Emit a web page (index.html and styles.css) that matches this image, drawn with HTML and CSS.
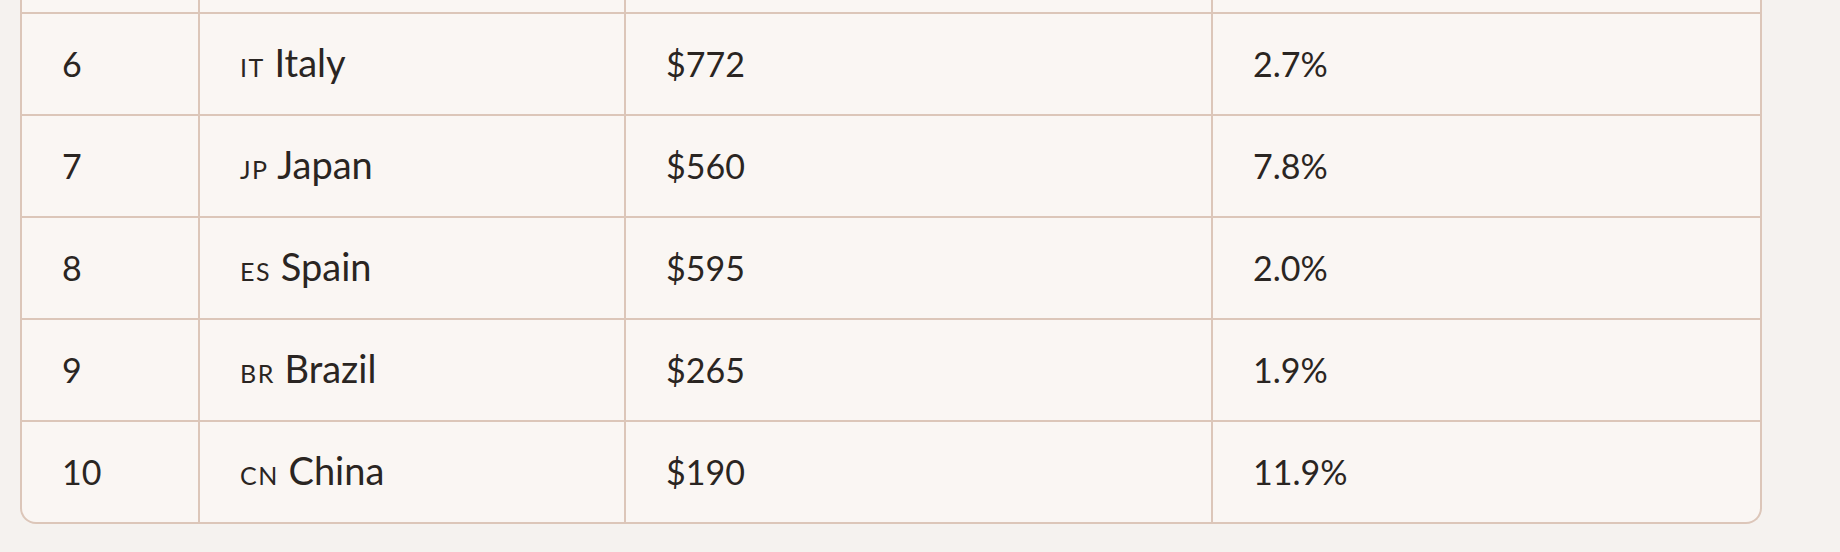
FILE: index.html
```html
<!DOCTYPE html>
<html lang="en">
<head>
<meta charset="utf-8">
<title>Top countries</title>
<link rel="stylesheet" href="styles.css">
</head>
<body>
<div class="table-wrap">
  <table class="rank-table">
    <tbody>
      <tr class="row-clipped"><td></td><td></td><td></td><td></td></tr>
      <tr><td>6</td><td class="country"><span class="code">IT</span> Italy</td><td>$772</td><td>2.7%</td></tr>
      <tr><td>7</td><td class="country"><span class="code">JP</span> Japan</td><td>$560</td><td>7.8%</td></tr>
      <tr><td>8</td><td class="country"><span class="code">ES</span> Spain</td><td>$595</td><td>2.0%</td></tr>
      <tr><td>9</td><td class="country"><span class="code">BR</span> Brazil</td><td>$265</td><td>1.9%</td></tr>
      <tr><td>10</td><td class="country"><span class="code">CN</span> China</td><td>$190</td><td>11.9%</td></tr>
    </tbody>
  </table>
</div>
</body>
</html>
```

FILE: styles.css
```css
html, body {
  margin: 0;
  padding: 0;
}
body {
  background: #f5f2ef;
  font-family: Lato, "Open Sans", sans-serif;
  color: #2a2522;
}
.table-wrap {
  margin-left: 20px;
  width: 1742px;
  box-sizing: border-box;
  border: 2px solid #dcc6b9;
  border-top: none;
  border-radius: 0 0 16px 16px;
  background: #faf6f3;
  overflow: hidden;
}
.rank-table {
  width: 100%;
  border-collapse: separate;
  border-spacing: 0;
  table-layout: fixed;
}
.rank-table td {
  height: 100px;
  padding: 0 0 0 40px;
  box-sizing: border-box;
  font-size: 34px;
  line-height: 40px;
  vertical-align: middle;
  border-top: 2px solid #dcc6b9;
  border-right: 2px solid #dcc6b9;
  white-space: nowrap;
}
.rank-table td:last-child {
  border-right: none;
}
.rank-table td:nth-child(1) { width: 178px; }
.rank-table td:nth-child(2) { width: 426px; }
.rank-table td:nth-child(3) { width: 587px; }
.rank-table tr:not(.row-clipped) td { height: 102px; }
.rank-table .row-clipped td {
  border-top: none;
  height: 12px;
  padding: 0;
}
.rank-table td.country {
  font-size: 38px;
}
.code {
  font-size: 25px;
  letter-spacing: 1.5px;
}
```
